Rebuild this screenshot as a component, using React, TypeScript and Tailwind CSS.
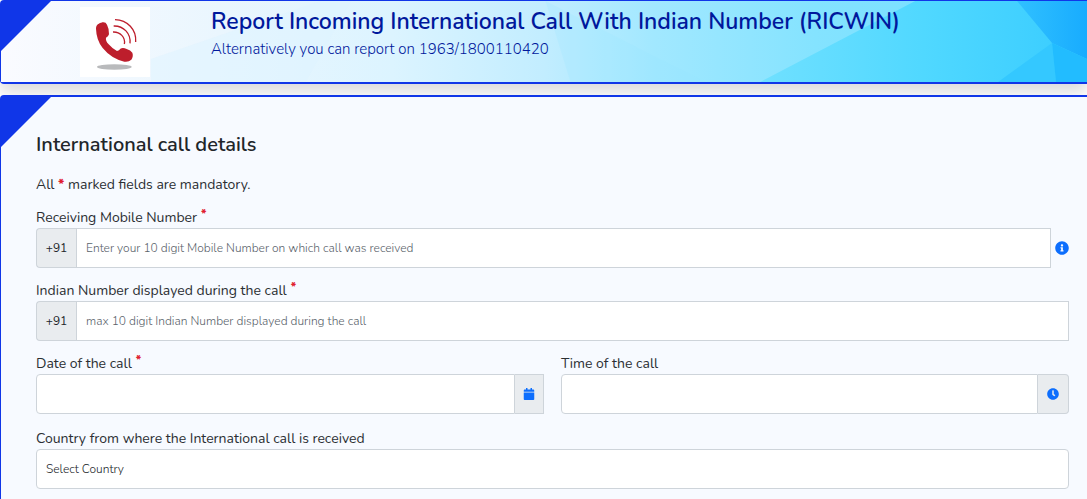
import React from "react";
import { FaCalendar, FaClock, FaInfoCircle } from "react-icons/fa";

const inputClass =
  "block h-10 min-w-0 flex-1 border border-[#ced4da] bg-white px-[9px] text-xs font-light text-[#212529] placeholder:text-[#59626a] outline-none";
const addonClass =
  "flex h-10 items-center justify-center border border-[#ced4da] bg-[#e9ecef] text-xs text-[#212529]";

/**
 * Blue triangle in the top left corner of a card
 */
function Corner() {
  return (
    <div className="absolute top-0 left-0 size-[50px] bg-[#1036e8] [clip-path:polygon(0_0,100%_0,0_100%)]" />
  );
}

function BannerBackground() {
  return (
    <svg
      className="absolute inset-0 size-full"
      viewBox="0 0 1087 81"
      preserveAspectRatio="none"
      aria-hidden="true"
    >
      <defs>
        <linearGradient id="sky">
          <stop offset="0" stopColor="#fafbff" />
          <stop offset="0.2" stopColor="#eaf6fe" />
          <stop offset="0.36" stopColor="#dcf4ff" />
          <stop offset="0.5" stopColor="#c2edff" />
          <stop offset="0.6" stopColor="#a2e8ff" />
          <stop offset="0.75" stopColor="#84e3ff" />
          <stop offset="1" stopColor="#6cdcff" />
        </linearGradient>
        <linearGradient id="cyan">
          <stop offset="0" stopColor="#70e0ff" />
          <stop offset="0.5" stopColor="#50d8ff" />
          <stop offset="1" stopColor="#38ccff" />
        </linearGradient>
        <linearGradient id="deep">
          <stop offset="0" stopColor="#30c0ff" />
          <stop offset="1" stopColor="#18acfe" />
        </linearGradient>
      </defs>
      <rect width="1087" height="81" fill="url(#sky)" />
      <polygon points="150,58 320,0 350,0 305,81 150,81" fill="#def3ff" opacity="0.5" />
      <polygon points="545,0 705,81 570,81" fill="#98e5ff" opacity="0.2" />
      <polygon points="760,81 915,0 1087,0 1087,81" fill="url(#cyan)" />
      <polygon points="1017,0 1087,0 1087,58 1052,42" fill="url(#deep)" />
      <polygon points="998,81 1052,42 1056,81" fill="#34c8ff" />
      <polygon points="1056,81 1052,42 1087,58 1087,81" fill="#22bcff" />
    </svg>
  );
}

function PhoneLogo() {
  return (
    <svg
      className="size-[70px] shrink-0 bg-white"
      viewBox="0 0 210 210"
      role="img"
      aria-label="Ringing phone"
    >
      <ellipse cx="103" cy="180" rx="52" ry="8" fill="#b9babc" />
      <path
        d="M48 65C48 53 57 49 67 46Q77 44 81 53Q88 66 87 82Q85 89 78 92Q76 101 86 112Q97 125 111 132Q118 131 121 125Q129 120 140 126Q152 130 157 137Q161 147 154 158Q146 166 133 164Q94 155 68 123Q49 99 48 65Z"
        fill="#bd1e2c"
      />
      <g fill="none" stroke="#bd1e2c" strokeWidth="4">
        <path d="M105 38C142 39 170 67 167 105" />
        <path d="M101 57C131 56 153 80 150 109" />
        <path d="M99 75C120 74 137 91 133 111" />
      </g>
    </svg>
  );
}

function Required() {
  return <sup className="-top-1 ml-1 text-xs font-extrabold text-[#e02030]">*</sup>;
}

type FieldProps = {
  id: string;
  label: string;
  required?: boolean;
  children: React.ReactNode;
};

function Field({ id, label, required, children }: FieldProps) {
  return (
    <div className="min-w-0 flex-1">
      <label htmlFor={id} className="block h-[21px] text-sm leading-[22px]">
        {label}
        {required && <Required />}
      </label>
      {children}
    </div>
  );
}

export default function App() {
  return (
    <div className="min-h-screen bg-white font-['Nunito','Lato',sans-serif] text-[#2b2f33]">
      <header className="relative flex h-[84px] rounded-l border border-r-0 border-b-2 border-[#1036e8] shadow-[0_8px_16px_rgba(0,0,0,0.15)]">
        <BannerBackground />
        <Corner />
        <div className="relative flex pt-1.5 pl-[79px]">
          <PhoneLogo />
          <div className="ml-[61px] text-[#00189c]">
            <h1 className="text-[23px] leading-[30px] font-semibold">
              Report Incoming International Call With Indian Number (RICWIN)
            </h1>
            <p className="text-[15px] leading-6 font-light">
              Alternatively you can report on 1963/1800110420
            </p>
          </div>
        </div>
      </header>

      <main className="relative mt-[11px] min-h-[404px] rounded-tl border-t-2 border-l border-[#1036e8] bg-[#f7faff] pt-8 pr-[18px] pb-2.5 pl-[35px]">
        <Corner />
        <h2 className="relative text-xl leading-8 font-semibold text-[#212529]">
          International call details
        </h2>
        <p className="mt-3 text-sm leading-6">
          All <span className="font-extrabold text-[#e02030]">*</span> marked fields are mandatory.
        </p>

        <form className="mt-2.5 flex flex-col gap-3">
          <Field id="mobile" label="Receiving Mobile Number" required>
            <div className="flex items-center">
              <span className={`${addonClass} w-10 rounded-l border-r-0`}>+91</span>
              <input
                id="mobile"
                type="tel"
                className={inputClass}
                placeholder="Enter your 10 digit Mobile Number on which call was received"
              />
              <button type="button" aria-label="Info" className="ml-1 text-[#0d6efd]">
                <FaInfoCircle className="size-3.5" />
              </button>
            </div>
          </Field>

          <Field id="indian" label="Indian Number displayed during the call" required>
            <div className="flex">
              <span className={`${addonClass} w-10 rounded-l border-r-0`}>+91</span>
              <input
                id="indian"
                type="tel"
                className={inputClass}
                placeholder="max 10 digit Indian Number displayed during the call"
              />
            </div>
          </Field>

          <div className="flex gap-[17px]">
            <Field id="date" label="Date of the call" required>
              <div className="flex">
                <input id="date" type="text" className={`${inputClass} rounded-l`} />
                <button
                  type="button"
                  aria-label="Pick date"
                  className={`${addonClass} w-[29px] border-l-0`}
                >
                  <FaCalendar className="size-3" color="#0d6efd" />
                </button>
              </div>
            </Field>
            <Field id="time" label="Time of the call">
              <div className="flex">
                <input id="time" type="text" className={`${inputClass} rounded-l`} />
                <button
                  type="button"
                  aria-label="Pick time"
                  className={`${addonClass} w-[31px] rounded-r border-l-0`}
                >
                  <FaClock className="size-3" color="#0d6efd" />
                </button>
              </div>
            </Field>
          </div>

          <div className="flex pt-0.5">
            <Field id="country" label="Country from where the International call is received">
              <div className="flex">
                <select id="country" className={`${inputClass} appearance-none rounded`}>
                  <option>Select Country</option>
                </select>
              </div>
            </Field>
          </div>
        </form>
      </main>
    </div>
  );
}
